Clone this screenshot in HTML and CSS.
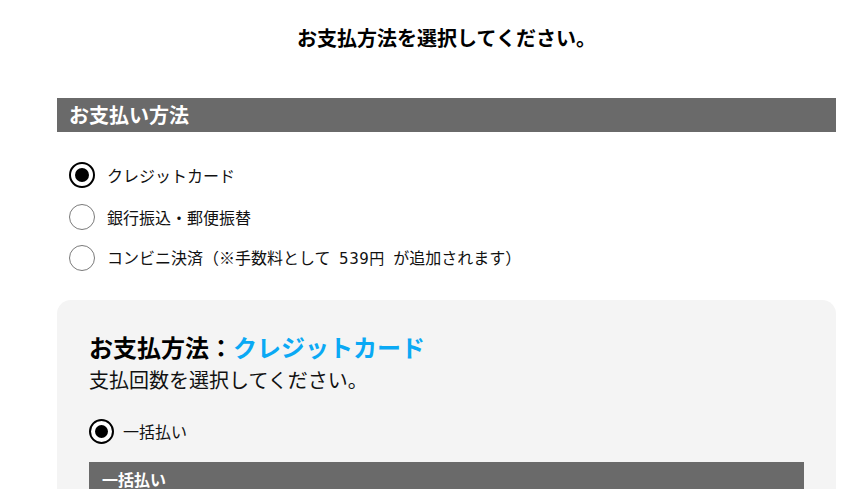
FILE: index.html
```html
<!DOCTYPE html>
<html lang="ja">
<head>
<meta charset="utf-8">
<title>お支払方法</title>
<link rel="stylesheet" href="styles.css">
</head>
<body>
<div class="page">
  <h1 class="page-title">お支払方法を選択してください。</h1>
  <section class="method">
    <h2 class="bar">お支払い方法</h2>
    <ul class="radio-list">
      <li class="radio-row"><span class="radio checked"></span><span class="label">クレジットカード</span></li>
      <li class="radio-row"><span class="radio"></span><span class="label">銀行振込・郵便振替</span></li>
      <li class="radio-row"><span class="radio"></span><span class="label">コンビニ決済（※手数料として <span class="num">539円</span> が追加されます）</span></li>
    </ul>
  </section>
  <section class="card">
    <h3 class="card-title">お支払方法：<span class="accent">クレジットカード</span></h3>
    <p class="card-sub">支払回数を選択してください。</p>
    <div class="radio-row small"><span class="radio checked"></span><span class="label">一括払い</span></div>
    <h4 class="bar inner">一括払い</h4>
  </section>
</div>
</body>
</html>
```

FILE: styles.css
```css
html, body {
  margin: 0;
  padding: 0;
  background: #fff;
}
body {
  font-family: "Noto Sans CJK JP", "Noto Sans", sans-serif;
  color: #111;
}
.page {
  margin: 0 30px 0 57px;
  display: flex;
  flex-direction: column;
}
.page-title {
  margin: 0;
  padding-top: 24px;
  font-size: 20px;
  line-height: 28px;
  font-weight: 700;
  text-align: center;
  color: #000;
}
.method {
  margin-top: 46px;
}
.bar {
  margin: 0;
  background: #6a6a6a;
  color: #fff;
  font-weight: 700;
}
.method .bar {
  height: 34px;
  line-height: 34px;
  font-size: 20px;
  padding-left: 12px;
}
.radio-list {
  list-style: none;
  margin: 30px 0 0;
  padding: 0 0 0 12px;
  display: flex;
  flex-direction: column;
  gap: 15.5px;
}
.radio-row {
  display: flex;
  align-items: center;
  gap: 12px;
  height: 26px;
}
.radio {
  box-sizing: border-box;
  width: 26px;
  height: 26px;
  flex: none;
  border-radius: 50%;
  border: 1px solid #7a7a7a;
  background: #fff;
  position: relative;
}
.radio.checked {
  border: 2px solid #000;
}
.radio.checked::after {
  content: "";
  position: absolute;
  left: 50%;
  top: 50%;
  width: 14px;
  height: 14px;
  margin: -7px 0 0 -7px;
  border-radius: 50%;
  background: #000;
}
.label {
  font-size: 16px;
  line-height: 24px;
  color: #111;
  word-spacing: 3px;
}
.num {
  font-family: "DejaVu Sans", "Noto Sans CJK JP", sans-serif;
  font-size: 15px;
  letter-spacing: 0.5px;
  padding: 0 2px;
}
.card {
  margin-top: 29px;
  background: #f4f4f4;
  border-radius: 14px;
  padding: 29px 32px 20px;
}
.card-title {
  margin: 0;
  font-size: 24px;
  line-height: 36px;
  font-weight: 700;
  color: #000;
}
.accent {
  color: #0aa9f4;
}
.card-sub {
  margin: 0;
  font-size: 20px;
  line-height: 29px;
  color: #111;
}
.radio-row.small {
  margin-top: 24.5px;
  height: 25px;
  gap: 9px;
}
.radio-row.small .radio {
  width: 25px;
  height: 25px;
}
.radio-row.small .radio.checked::after {
  width: 13px;
  height: 13px;
  margin: -6.5px 0 0 -6.5px;
}
.bar.inner {
  margin-top: 18.5px;
  height: 34px;
  line-height: 34px;
  font-size: 16px;
  padding-left: 13px;
}
```
